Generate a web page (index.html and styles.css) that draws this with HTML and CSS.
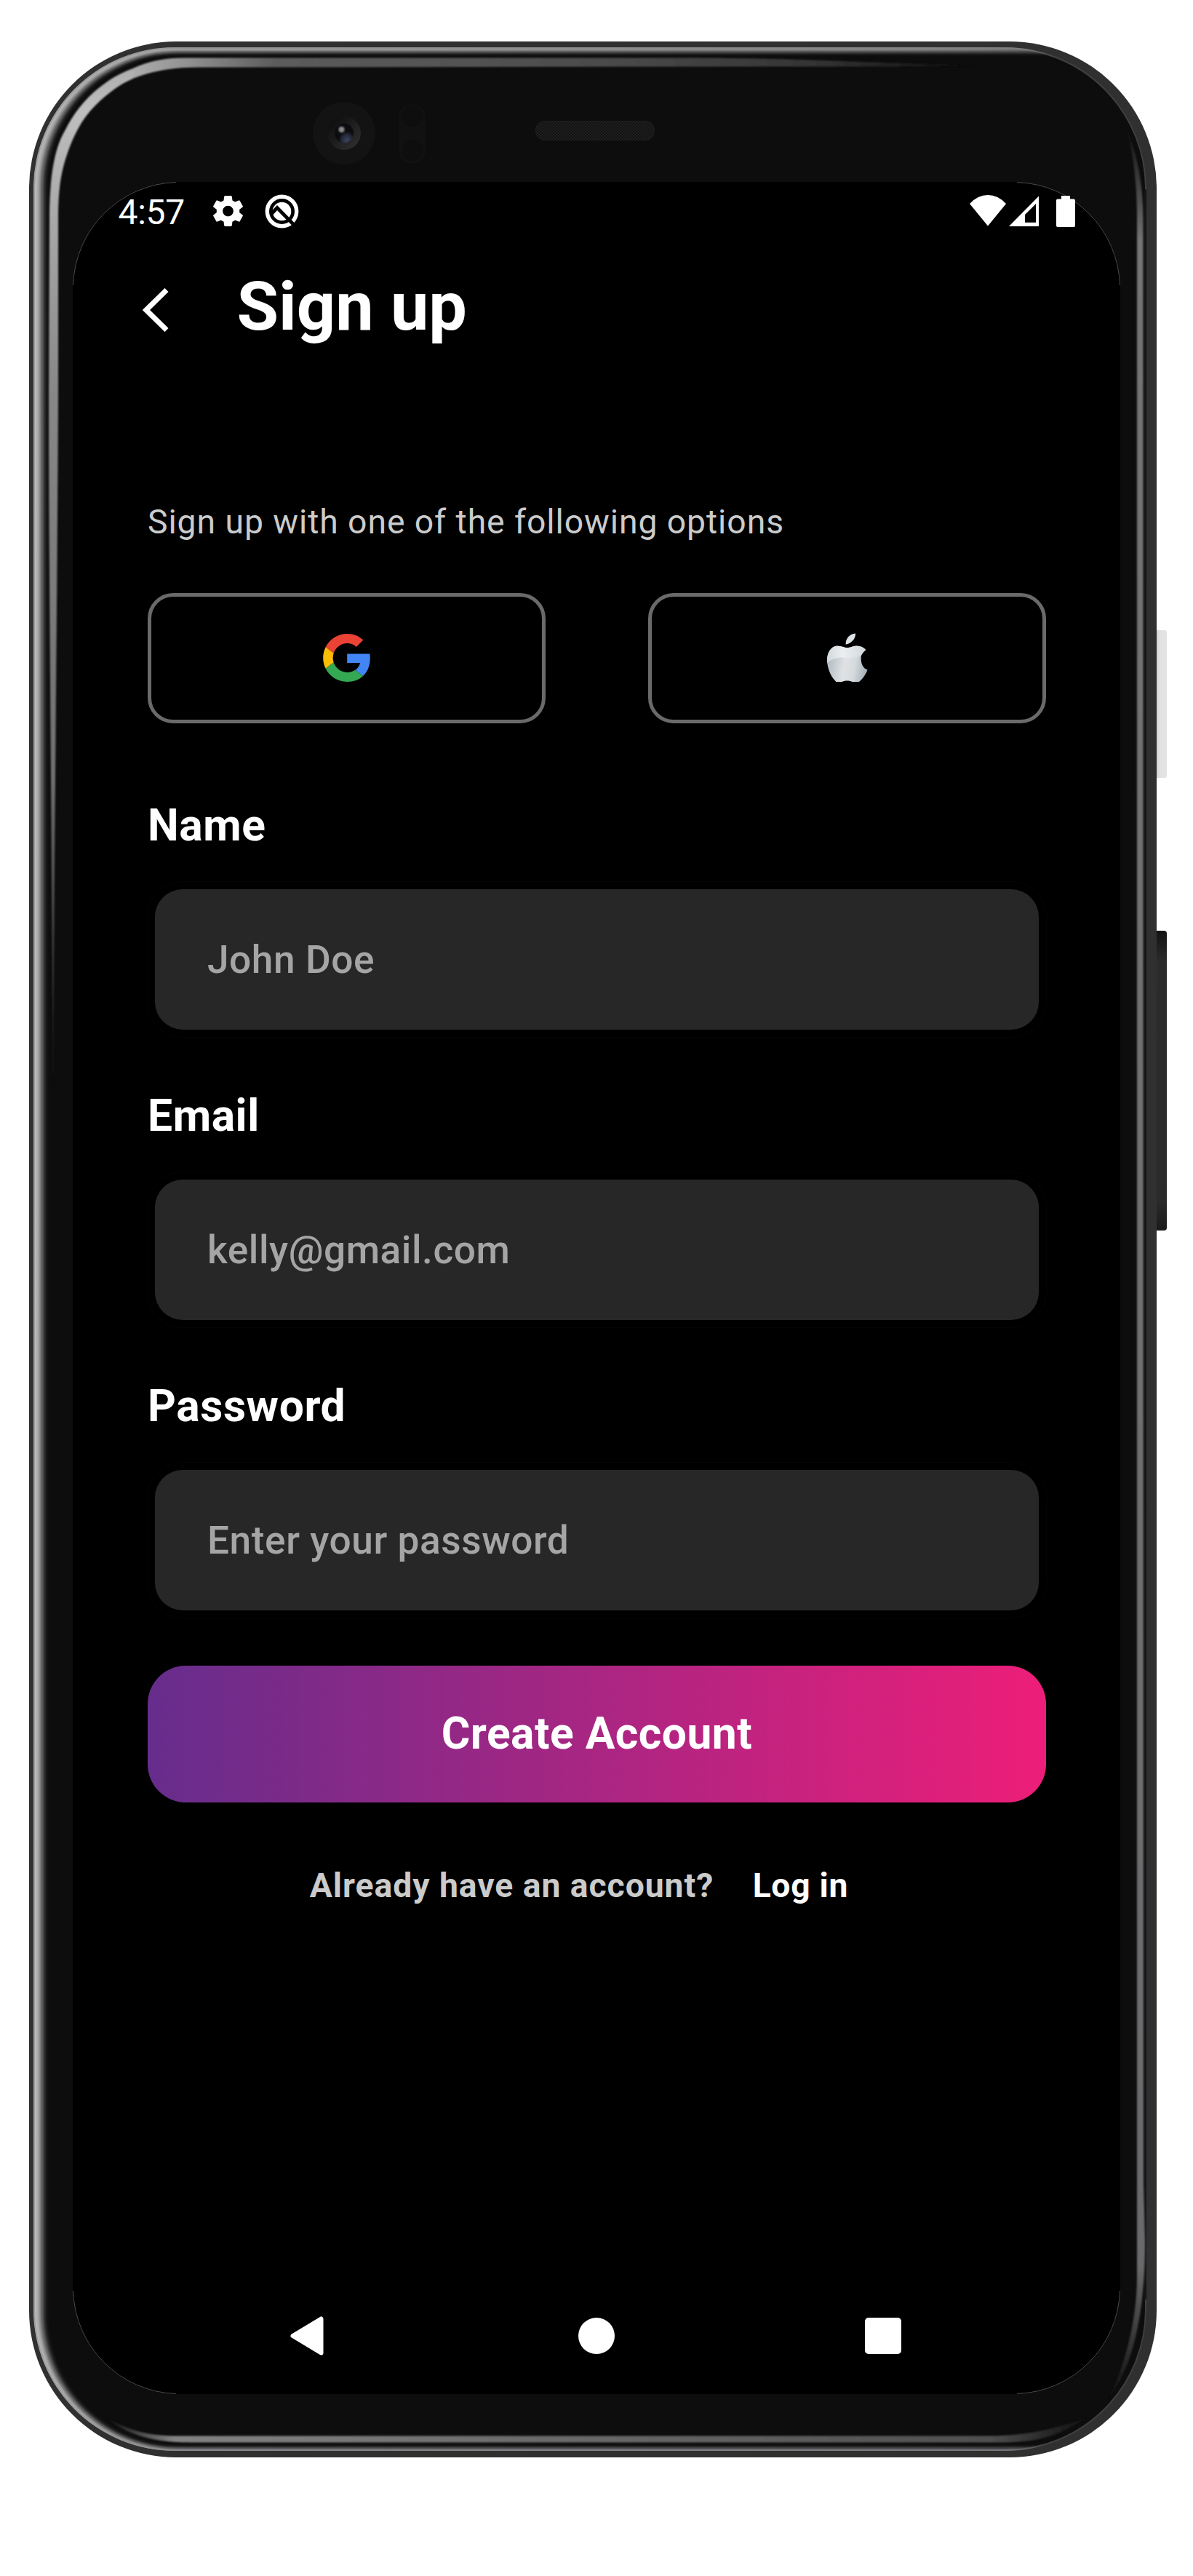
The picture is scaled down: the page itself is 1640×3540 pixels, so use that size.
FILE: index.html
```html
<!DOCTYPE html>
<html lang="en">
<head>
<meta charset="utf-8">
<title>Sign up</title>
<link rel="stylesheet" href="styles.css">
</head>
<body>
<div class="stage">
  <svg class="device" viewBox="0 0 1640 3540" aria-hidden="true">
    <defs>
      <linearGradient id="bezel" x1="0" x2="1" y1="0" y2="0">
        <stop offset="0" stop-color="#bcbaba"/><stop offset=".15" stop-color="#a8a8a8"/><stop offset=".8" stop-color="#8c8c8c"/><stop offset="1" stop-color="#6a6a6a"/>
      </linearGradient>
      <linearGradient id="leftGlow" gradientUnits="userSpaceOnUse" x1="0" x2="0" y1="80" y2="1531">
        <stop offset="0" stop-color="#aaa"/><stop offset=".05" stop-color="#bebebe"/><stop offset=".14" stop-color="#ababab"/><stop offset=".32" stop-color="#878787"/><stop offset=".68" stop-color="#707070"/><stop offset="1" stop-color="#0d0d0f"/>
      </linearGradient>
      <linearGradient id="topGlow" gradientUnits="userSpaceOnUse" x1="180" x2="1345" y1="0" y2="0">
        <stop offset="0" stop-color="#adadad"/><stop offset=".07" stop-color="#909090"/><stop offset=".17" stop-color="#5c5c5c"/><stop offset=".55" stop-color="#4c4c4c"/><stop offset=".8" stop-color="#353535"/><stop offset="1" stop-color="#0d0d0f"/>
      </linearGradient>
      <linearGradient id="rightGlow" gradientUnits="userSpaceOnUse" x1="0" x2="0" y1="176" y2="3298">
        <stop offset="0" stop-color="#0d0d0f"/><stop offset=".05" stop-color="#747474"/><stop offset=".94" stop-color="#6b6b6d"/><stop offset=".965" stop-color="#444"/><stop offset="1" stop-color="#0d0d0f"/>
      </linearGradient>
      <linearGradient id="bottomGlow" gradientUnits="userSpaceOnUse" x1="144" x2="1495" y1="0" y2="0">
        <stop offset="0" stop-color="#0d0d0f"/><stop offset=".07" stop-color="#838384"/><stop offset=".4" stop-color="#6e6e6e"/><stop offset=".9" stop-color="#505050"/><stop offset="1" stop-color="#0d0d0f"/>
      </linearGradient>
      <linearGradient id="powerX" x1="0" x2="1" y1="0" y2="0">
        <stop offset="0" stop-color="#999"/><stop offset=".35" stop-color="#ccc"/><stop offset=".6" stop-color="#e2e2e2"/><stop offset="1" stop-color="#e4e4e4"/>
      </linearGradient>
      <linearGradient id="volume" x1="0" x2="0" y1="0" y2="1">
        <stop offset="0" stop-color="#131313"/><stop offset=".1" stop-color="#2b2b2b"/><stop offset=".9" stop-color="#2a2a2a"/><stop offset="1" stop-color="#1a1a1a"/>
      </linearGradient>
      <radialGradient id="lens" cx=".65" cy=".85" r=".75">
        <stop offset="0" stop-color="#3b4360"/><stop offset=".35" stop-color="#262a3a"/><stop offset=".6" stop-color="#0c0c10"/>
      </radialGradient>
      <linearGradient id="ring" x1="0" x2="1" y1="0" y2="1">
        <stop offset=".2" stop-color="#111"/><stop offset="1" stop-color="#333335"/>
      </linearGradient>
      <pattern id="mesh" width="4" height="4" patternUnits="userSpaceOnUse">
        <rect width="4" height="4" fill="#111"/><rect width="2" height="2" fill="#202020"/><rect x="2" y="2" width="2" height="2" fill="#202020"/>
      </pattern>
      <filter id="fade" x="-5%" y="-5%" width="110%" height="110%"><feGaussianBlur stdDeviation="4.2 2.4"/></filter>
      <filter id="soft" x="-30%" y="-30%" width="160%" height="160%"><feGaussianBlur stdDeviation=".8"/></filter>
      <clipPath id="face"><rect x="46" y="65" width="1530" height="3303" rx="194"/></clipPath>
    </defs>

    <rect x="1580" y="866" width="24" height="203" rx="3" fill="url(#powerX)"/>
    <rect x="1580" y="1279" width="24" height="412" rx="4" fill="url(#volume)"/>

    <rect x="40" y="57" width="1550" height="3320" rx="202" fill="#303030"/>
    <g clip-path="url(#face)">
      <rect x="46" y="65" width="1530" height="3303" fill="url(#bezel)"/>
      <rect x="57.500" y="71.500" width="1550" height="3293" rx="186" fill="#0d0d0f" filter="url(#fade)"/>
      <rect x="47" y="66" width="1528" height="3301" rx="193" fill="none" stroke="#7e7e7e" stroke-width="2" opacity=".45"/>
      <rect x="1573" y="260" width="3" height="2900" fill="#151517"/>
    </g>

    <g filter="url(#soft)">
      <path fill="url(#leftGlow)" d="M73 1531 C71 1100 67 800 67 540 L68 300 C68 235 77 200 89 180 C100 158 115 137 137 120 C152 108 166 100 183 94 L183 108 C166 115 148 128 131 145 C112 163 100 190 94 207 C85 232 80 255 80 300 L80 540 C79 800 75 1100 73 1531Z"/>
      <path fill="url(#topGlow)" d="M182.500 94 C205 84 225 79.500 255 79.500 L960 79.500 C1080 80 1200 86 1345 90.500 C1200 91.500 1080 91.500 960 91.500 L272 92.500 C240 92.500 210 97 182.500 108Z"/>
      <path fill="url(#rightGlow)" d="M1549 176 C1560 205 1571 240 1571.500 300 L1572 3000 L1574 3080 C1574 3190 1555 3255 1523 3298 C1545 3255 1563 3190 1563 3130 L1563 300 C1563 250 1558 215 1549 176Z"/>
      <path fill="url(#bottomGlow)" d="M144 3322 C180 3341 205 3347.500 245 3347.500 L1369 3347.500 C1420 3346 1455 3336 1495 3322 C1460 3345 1430 3356 1380 3356.500 L262 3356.500 C205 3356.500 175 3345 144 3322Z"/>
    </g>

    <circle cx="473" cy="183" r="43" fill="#131313"/>
    <circle cx="473" cy="183" r="23" fill="url(#ring)"/>
    <ellipse cx="473" cy="183" rx="13" ry="13.500" fill="url(#lens)"/>
    <circle cx="469.500" cy="178" r="4" fill="#8a8a8a" filter="url(#soft)"/>
    <rect x="548" y="143" width="37" height="82" rx="18.500" fill="#111112"/>
    <circle cx="566.500" cy="160" r="14.500" fill="#0e0e0f"/>
    <circle cx="566.500" cy="207" r="14.500" fill="#0e0e0f"/>
    <rect x="736.500" y="166.500" width="163" height="26" rx="12" fill="url(#mesh)" stroke="#1e1e1e"/>

    <rect x="100" y="250" width="1440" height="3040" rx="146" fill="#000"/>
    <path fill="none" stroke="#4a4a4a" d="M100.500 392A146 146 0 0 1 242 250.500M1398 250.500A146 146 0 0 1 1539.500 392M100.500 3148A146 146 0 0 0 242 3289.500M1398 3289.500A146 146 0 0 0 1539.500 3148"/>
  </svg>

  <main class="screen">
    <div class="status">
      <span class="time">4:57</span>
      <svg class="gear" width="41" height="42" viewBox="2.270 2 19.460 20"><path fill="#fff" d="M19.430 12.980c.04-.32.07-.64.07-.98s-.03-.66-.07-.98l2.110-1.650c.19-.15.24-.42.12-.64l-2-3.460c-.12-.22-.39-.3-.61-.22l-2.490 1c-.52-.4-1.080-.73-1.690-.98l-.38-2.650C14.460 2.180 14.250 2 14 2h-4c-.25 0-.46.18-.49.42l-.38 2.650c-.61.25-1.170.59-1.690.98l-2.490-1c-.23-.09-.49 0-.61.22l-2 3.460c-.13.22-.07.49.12.64l2.110 1.650c-.04.32-.07.65-.07.98s.03.66.07.98l-2.110 1.650c-.19.15-.24.42-.12.64l2 3.460c.12.22.39.3.61.22l2.490-1c.52.4 1.080.73 1.690.98l.38 2.650c.03.24.24.42.49.42h4c.25 0 .46-.18.49-.42l.38-2.650c.61-.25 1.170-.59 1.690-.98l2.490 1c.23.09.49 0 .61-.22l2-3.460c.12-.22.07-.49-.12-.64l-2.110-1.650zM12 15.500c-1.930 0-3.500-1.570-3.500-3.500s1.570-3.500 3.500-3.500 3.500 1.570 3.500 3.500-1.570 3.500-3.500 3.500z"/></svg>
      <svg class="beta" width="47" height="47" viewBox="0 0 47 47"><circle cx="23.500" cy="23.500" r="20.200" fill="none" stroke="#fff" stroke-width="5.400"/><circle cx="23.500" cy="23.500" r="12.800" fill="#fff"/><path d="M9 27L17 18.500L42.500 44.500" fill="none" stroke="#000" stroke-width="4.800"/></svg>
      <svg class="signals" width="145" height="44" viewBox="1333 267 145 44">
        <path fill="#fff" d="M1333 279Q1344 267 1358 267T1383 279L1358 309.500ZM1452 274.500q0-2 2-2h5V268h12v4.500h5q2 0 2 2V309q0 2-2 2h-22q-2 0-2-2Z"/>
        <path fill="#fff" fill-rule="evenodd" d="M1387 310L1428 268.500V310ZM1409 304.700H1424V279L1409 294Z"/>
      </svg>
    </div>

    <header class="header">
      <svg class="back" width="36" height="60" viewBox="0 0 36 60"><path d="M33 2.500L5 30L33 57.500" fill="none" stroke="#fff" stroke-width="7.200"/></svg>
      <h1>Sign up</h1>
    </header>

    <p class="hint">Sign up with one of the following options</p>

    <div class="social">
      <button class="provider" aria-label="Google">
        <svg width="65" height="66" viewBox="0 0 47 48"><path fill="#EA4335" d="M24 9.500c3.540 0 6.710 1.220 9.210 3.600l6.850-6.850C35.900 2.380 30.470 0 24 0 14.620 0 6.510 5.380 2.560 13.220l7.980 6.190C12.430 13.720 17.740 9.500 24 9.500z"/><path fill="#4285F4" d="M46.980 24.550c0-1.570-.15-3.090-.38-4.550H24v9.020h12.940c-.58 2.960-2.260 5.480-4.780 7.180l7.730 6c4.510-4.180 7.090-10.360 7.090-17.650z"/><path fill="#FBBC05" d="M10.530 28.590c-.48-1.450-.76-2.990-.76-4.590s.27-3.140.76-4.590l-7.980-6.190C.92 16.460 0 20.120 0 24c0 3.880.92 7.540 2.560 10.780l7.970-6.190z"/><path fill="#34A853" d="M24 48c6.480 0 11.930-2.130 15.890-5.810l-7.730-6c-2.150 1.450-4.920 2.300-8.160 2.300-6.260 0-11.570-4.220-13.470-9.910l-7.980 6.190C6.510 42.620 14.620 48 24 48z"/></svg>
      </button>
      <button class="provider" aria-label="Apple">
        <svg width="56" height="68" viewBox="50 90 168 203">
          <defs>
            <linearGradient id="silver" x1="0" x2="1" y1="0" y2=".15"><stop offset="0" stop-color="#a3aeb6"/><stop offset=".5" stop-color="#e0e3e5"/><stop offset=".72" stop-color="#d5dadd"/><stop offset="1" stop-color="#a2adb5"/></linearGradient>
            <linearGradient id="gloss" x1="0" x2="1" y1="0" y2="0"><stop offset="0" stop-color="#cfd5d9"/><stop offset=".4" stop-color="#eceff1"/><stop offset="1" stop-color="#ccd3d8"/></linearGradient>
            <clipPath id="body"><path d="M132 150C120 150 105 141 90 142C66 145 50 170 50 200C50 240 70 275 88 291L110 291C120 284 145 284 155 291L180 291C197 280 212 255 217 240C200 238 188 215 190 190C190 178 200 165 210 159C200 148 185 141 170 142C155 143 148 150 132 150Z"/></clipPath>
          </defs>
          <g clip-path="url(#body)"><rect x="40" y="130" width="190" height="170" fill="url(#silver)"/><path fill="url(#gloss)" d="M40 130H225V150C200 180 175 196 135 192C100 186 70 190 40 222Z"/></g>
          <path fill="#dde2e5" d="M127 136C125 112 145 92 167 91C168 112 150 134 127 136Z"/>
        </svg>
      </button>
    </div>

    <section class="form">
      <div class="group"><label>Name</label><div class="field">John Doe</div></div>
      <div class="group"><label>Email</label><div class="field">kelly@gmail.com</div></div>
      <div class="group"><label>Password</label><div class="field">Enter your password</div></div>
    </section>

    <button class="create">Create Account</button>

    <p class="switch"><span>Already have an account?</span><a>Log in</a></p>

    <nav class="nav">
      <svg width="50" height="56" viewBox="0 0 50 56"><path d="M44.500 4.500V51.500L5.500 28Z" fill="#fff" stroke="#fff" stroke-width="6" stroke-linejoin="round"/></svg>
      <span class="home"></span>
      <span class="recent"></span>
    </nav>
  </main>
</div>
</body>
</html>
```
FILE: styles.css
```css
* { box-sizing: border-box; }

body {
  margin: 0;
  background: #fff;
  font-family: Roboto, sans-serif;
  color: #fff;
}

.stage {
  position: relative;
  width: 1640px;
  height: 3540px;
  padding: 250px 100px;
}

.device {
  position: absolute;
  inset: 0;
  width: 1640px;
  height: 3540px;
}

.screen {
  position: relative;
  display: flex;
  flex-direction: column;
  width: 1440px;
  height: 3040px;
}

svg { display: block; flex: none; }

.status {
  display: flex;
  align-items: center;
  height: 80px;
  padding: 0 62px 0 62.500px;
}

.time {
  width: 130px;
  padding-top: 4px;
  font-size: 48px;
  line-height: 80px;
  letter-spacing: -.3px;
}

.beta { margin-left: 30px; }

.signals { margin-left: auto; }

.header {
  display: flex;
  align-items: center;
  gap: 93.500px;
  height: 110px;
  margin-top: 36px;
  padding-left: 96px;
}

.back { margin-top: 10px; }

.header h1 {
  margin: 0;
  font-size: 93.500px;
  font-weight: 700;
  line-height: 110px;
}

.hint {
  margin: 214px 0 0 103px;
  font-size: 46.300px;
  line-height: 54px;
  letter-spacing: .930px;
  color: #cbcbcb;
}

.social {
  display: flex;
  justify-content: space-between;
  margin: 71px 102px 0 103px;
}

.provider {
  display: flex;
  align-items: center;
  justify-content: center;
  width: 547px;
  height: 178.500px;
  padding: 0;
  border: 5px solid #6a6a6a;
  border-radius: 35px;
  background: none;
}

.form {
  display: flex;
  flex-direction: column;
  gap: 84.500px;
  margin: 107px 102px 0 103px;
}

.group { display: flex; flex-direction: column; }

.group label {
  height: 121.500px;
  font-size: 60.500px;
  font-weight: 700;
  line-height: 68px;
  letter-spacing: .600px;
}

.field {
  height: 193px;
  margin: 0 10px;
  padding: 1px 0 0 72px;
  border-radius: 38px;
  box-shadow: 0 0 0 10px #000, 0 0 0 11px #050505;
  background: #272727;
  font-size: 53.200px;
  font-weight: 500;
  line-height: 193px;
  letter-spacing: .570px;
  color: #a5a5a5;
}

.create {
  height: 187.500px;
  margin: 76px 102px 0 103px;
  padding: 0;
  border: 0;
  border-radius: 52.500px;
  background: linear-gradient(90deg, #662d8c, #ed1e79);
  font: 700 60.500px/187px Roboto, sans-serif;
  letter-spacing: .500px;
  color: #fff;
}

.switch {
  display: flex;
  gap: 53.500px;
  margin: 87px 0 0 325.800px;
  font-size: 46.300px;
  font-weight: 700;
  line-height: 54px;
  letter-spacing: .950px;
  color: #cbcbcb;
}

.switch a {
  letter-spacing: .700px;
  color: #fff;
}

.nav {
  display: flex;
  align-items: center;
  margin-top: auto;
  height: 160px;
  padding-left: 297px;
}

.home {
  width: 50px;
  height: 50px;
  margin-left: 348px;
  border-radius: 50%;
  background: #fff;
}

.recent {
  width: 50px;
  height: 50px;
  margin-left: 344px;
  border-radius: 5px;
  background: #fff;
}
```
